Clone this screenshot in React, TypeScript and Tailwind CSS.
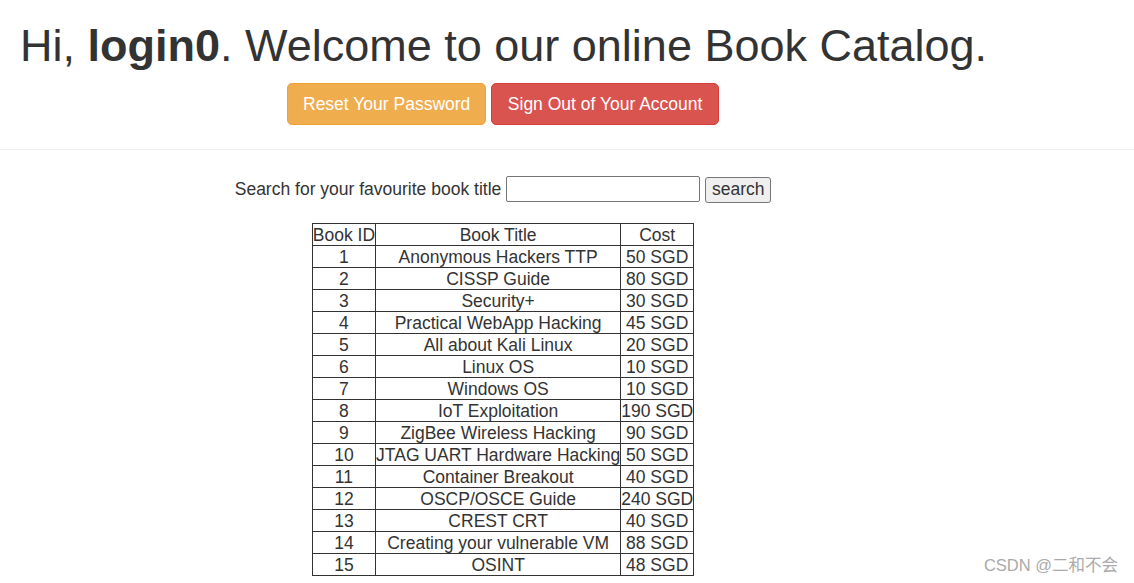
import * as React from "react"

const books: [number, string, string][] = [
  [1, "Anonymous Hackers TTP", "50 SGD"],
  [2, "CISSP Guide", "80 SGD"],
  [3, "Security+", "30 SGD"],
  [4, "Practical WebApp Hacking", "45 SGD"],
  [5, "All about Kali Linux", "20 SGD"],
  [6, "Linux OS", "10 SGD"],
  [7, "Windows OS", "10 SGD"],
  [8, "IoT Exploitation", "190 SGD"],
  [9, "ZigBee Wireless Hacking", "90 SGD"],
  [10, "JTAG UART Hardware Hacking", "50 SGD"],
  [11, "Container Breakout", "40 SGD"],
  [12, "OSCP/OSCE Guide", "240 SGD"],
  [13, "CREST CRT", "40 SGD"],
  [14, "Creating your vulnerable VM", "88 SGD"],
  [15, "OSINT", "48 SGD"],
]

export default function App() {
  return (
    <div className="relative min-h-[583px] bg-white text-[#333] font-['Liberation_Sans',Arial,sans-serif] overflow-hidden">
      <div className="pt-[21px] px-5">
        <h1 className="text-[45px] leading-[1.1] font-normal">
          Hi, <b>login0</b>. Welcome to our online Book Catalog.
        </h1>
        <div className="mt-[12.5px] pl-[267px] flex gap-[5px]">
          <button className="h-[42px] px-[15px] text-[17.5px] text-white bg-[#f0ad4e] border border-[#eea236] rounded-[5px]">
            Reset Your Password
          </button>
          <button className="h-[42px] px-[15.5px] text-[17.5px] text-white bg-[#d9534f] border border-[#d43f3a] rounded-[5px]">
            Sign Out of Your Account
          </button>
        </div>
      </div>

      <hr className="mt-6 border-0 border-t border-[#eee]" />

      <div className="w-[1006px] flex flex-col items-center">
        <div className="mt-[25px] flex items-center text-[17.5px]">
          <span>Search for your favourite book title</span>
          <input className="ml-[5px] w-[194px] h-[26px] border border-[#767676] rounded-[2px] px-1 outline-none" />
          <button className="ml-[5px] w-[66px] h-[26px] mt-[2px] bg-[#efefef] border border-[#767676] rounded-[3px] text-[17.5px] leading-none">
            search
          </button>
        </div>

        <table className="mt-[20px] border-collapse text-[17.5px] leading-[20px] text-center">
          <thead>
            <tr>
              <th className="border border-[#333] font-normal pt-px w-[63px] whitespace-nowrap">Book ID</th>
              <th className="border border-[#333] font-normal pt-px w-[245px] whitespace-nowrap">Book Title</th>
              <th className="border border-[#333] font-normal pt-px w-[73px] whitespace-nowrap">Cost</th>
            </tr>
          </thead>
          <tbody>
            {books.map(([id, title, cost]) => (
              <tr key={id}>
                <td className="border border-[#333] pt-px whitespace-nowrap">{id}</td>
                <td className="border border-[#333] pt-px whitespace-nowrap">{title}</td>
                <td className="border border-[#333] pt-px whitespace-nowrap">{cost}</td>
              </tr>
            ))}
          </tbody>
        </table>
      </div>

      <div className="absolute right-[16px] bottom-[5px] text-[16.5px] text-[#aaa] font-['Liberation_Sans','Noto_Sans_CJK_SC',sans-serif]">
        CSDN @二和不会
      </div>
    </div>
  )
}
